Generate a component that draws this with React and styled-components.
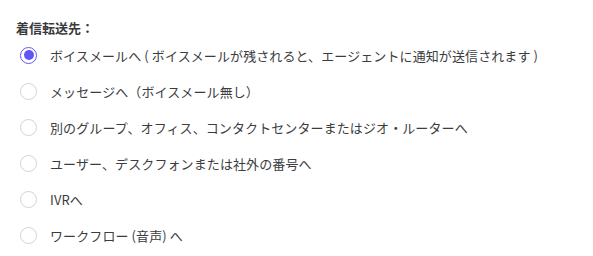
import React, { useState } from 'react';
import styled, { createGlobalStyle } from 'styled-components';

const GlobalStyle = createGlobalStyle`
  body {
    margin: 0;
    background: #ffffff;
    font-family: "Noto Sans CJK JP", "Noto Sans", sans-serif;
  }
`;

const options = [
  'ボイスメールへ ( ボイスメールが残されると、エージェントに通知が送信されます )',
  'メッセージへ（ボイスメール無し）',
  '別のグループ、オフィス、コンタクトセンターまたはジオ・ルーターへ',
  'ユーザー、デスクフォンまたは社外の番号へ',
  'IVRへ',
  'ワークフロー (音声) へ',
];

const Panel = styled.div`
  padding: 20px 16px 0;
`;

const Heading = styled.div`
  font-size: 13px;
  line-height: 16px;
  font-weight: 700;
  color: #3a3a3e;
`;

const List = styled.div`
  display: flex;
  flex-direction: column;
  gap: 16px;
  margin-top: 9px;
`;

const Row = styled.label`
  display: flex;
  align-items: center;
  gap: 13px;
  height: 20px;
  padding-left: 4px;
  font-size: 13px;
  letter-spacing: 0.1px;
  color: #3c3c40;
  cursor: pointer;
`;

const Radio = styled.span`
  box-sizing: border-box;
  width: 17px;
  height: 17px;
  border-radius: 50%;
  border: 1.5px solid ${p => (p.$checked ? '#6155f5' : '#d2d1dc')};
  display: flex;
  align-items: center;
  justify-content: center;
  flex: none;

  &::after {
    content: '';
    width: 10px;
    height: 10px;
    border-radius: 50%;
    background: #6155f5;
    display: ${p => (p.$checked ? 'block' : 'none')};
  }
`;

export default function App() {
  const [selected, setSelected] = useState(0);
  return (
    <>
      <GlobalStyle />
      <Panel>
        <Heading>着信転送先：</Heading>
        <List>
          {options.map((text, i) => (
            <Row key={text} onClick={() => setSelected(i)}>
              <Radio $checked={selected === i} />
              <span>{text}</span>
            </Row>
          ))}
        </List>
      </Panel>
    </>
  );
}
